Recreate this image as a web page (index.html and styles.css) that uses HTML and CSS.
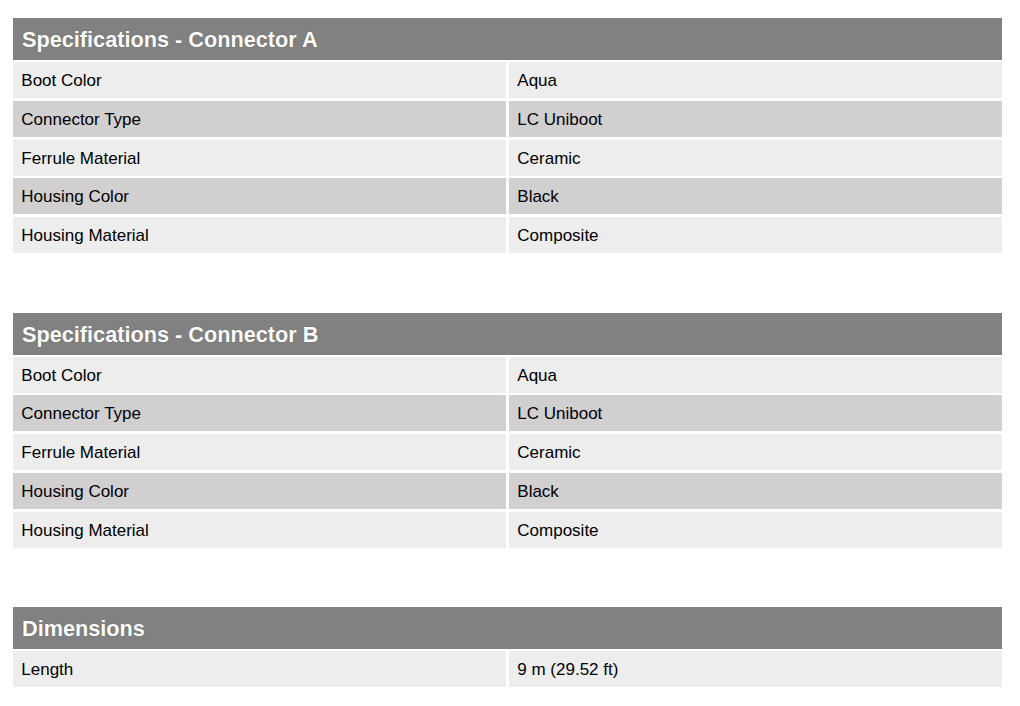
FILE: index.html
```html
<!DOCTYPE html>
<html>
<head>
<meta charset="utf-8">
<link rel="stylesheet" href="styles.css">
</head>
<body>
<div class="page">
  <section class="spec">
    <h2 class="spec-title">Specifications - Connector A</h2>
    <div class="spec-rows">
      <div class="row light"><div class="cell">Boot Color</div><div class="cell">Aqua</div></div>
      <div class="row dark"><div class="cell">Connector Type</div><div class="cell">LC Uniboot</div></div>
      <div class="row light"><div class="cell">Ferrule Material</div><div class="cell">Ceramic</div></div>
      <div class="row dark"><div class="cell">Housing Color</div><div class="cell">Black</div></div>
      <div class="row light"><div class="cell">Housing Material</div><div class="cell">Composite</div></div>
    </div>
  </section>
  <section class="spec">
    <h2 class="spec-title">Specifications - Connector B</h2>
    <div class="spec-rows">
      <div class="row light"><div class="cell">Boot Color</div><div class="cell">Aqua</div></div>
      <div class="row dark"><div class="cell">Connector Type</div><div class="cell">LC Uniboot</div></div>
      <div class="row light"><div class="cell">Ferrule Material</div><div class="cell">Ceramic</div></div>
      <div class="row dark"><div class="cell">Housing Color</div><div class="cell">Black</div></div>
      <div class="row light"><div class="cell">Housing Material</div><div class="cell">Composite</div></div>
    </div>
  </section>
  <section class="spec">
    <h2 class="spec-title">Dimensions</h2>
    <div class="spec-rows">
      <div class="row light"><div class="cell">Length</div><div class="cell">9 m (29.52 ft)</div></div>
    </div>
  </section>
</div>
</body>
</html>
```

FILE: styles.css
```css
html, body {
  margin: 0;
  padding: 0;
  background: #ffffff;
}
body {
  font-family: "Liberation Sans", Arial, sans-serif;
  color: #000000;
}
.page {
  padding: 18px 18px 0 13px;
  display: flex;
  flex-direction: column;
  gap: 59.5px;
  width: 989px;
}
.spec {
  display: flex;
  flex-direction: column;
  gap: 2px;
}
.spec-title {
  margin: 0;
  height: 42px;
  box-sizing: border-box;
  padding-top: 2px;
  background: #818182;
  color: #ffffff;
  font-size: 21.7px;
  font-weight: bold;
  display: flex;
  align-items: center;
  padding-left: 9px;
  text-shadow: 0 0 1px rgba(0,0,0,0.35);
}
.spec-rows {
  display: flex;
  flex-direction: column;
  gap: 2.8px;
}
.row {
  display: grid;
  grid-template-columns: 1fr 1fr;
  column-gap: 3px;
  height: 36px;
}
.cell {
  display: flex;
  align-items: center;
  box-sizing: border-box;
  padding: 2px 0 0 8.3px;
  font-size: 17px;
}
.light .cell {
  background: #ededed;
}
.dark .cell {
  background: #d1cfd0;
}
```
